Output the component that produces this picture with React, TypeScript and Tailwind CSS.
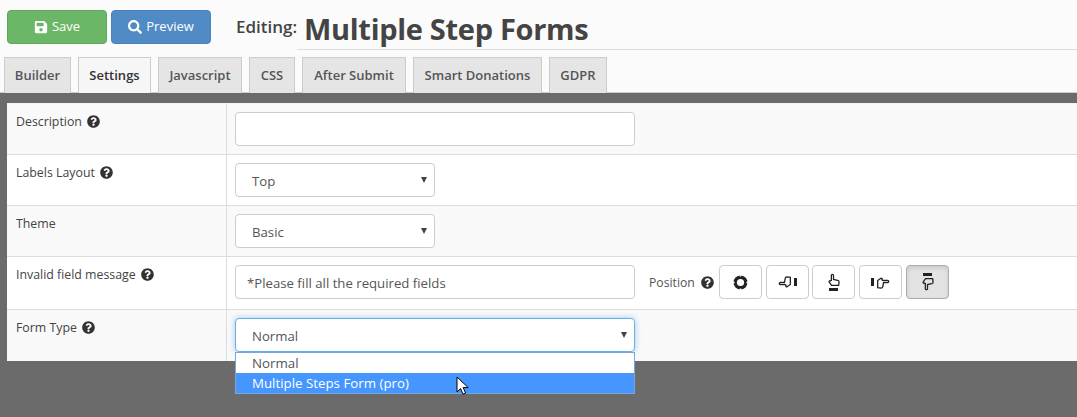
import React from 'react';
import { FaSave, FaSearch, FaQuestionCircle } from 'react-icons/fa';

const tabs = [
  { name: 'Builder', w: 'w-[67px]' },
  { name: 'Settings', w: 'w-[73px]' },
  { name: 'Javascript', w: 'w-[84px]' },
  { name: 'CSS', w: 'w-[46px]' },
  { name: 'After Submit', w: 'w-[104px]' },
  { name: 'Smart Donations', w: 'w-[129px]' },
  { name: 'GDPR', w: 'w-[58px]' },
];

const Help = () => <FaQuestionCircle size={13} className="text-[#333] inline-block" />;

const Caret = () => (
  <span className="absolute right-[7px] top-[13px] w-0 h-0 border-x-[3px] border-x-transparent border-t-[6px] border-t-[#444]" />
);

const Select = ({ value, width, focus }: { value: string; width: string; focus?: boolean }) => (
  <div
    className={`relative h-[34px] ${width} bg-white rounded border flex items-center pl-[16px] pt-[3px] text-[13.2px] text-[#555] ${
      focus ? 'border-[#66afe9] shadow-[0_0_6px_rgba(102,175,233,0.6)]' : 'border-[#ccc]'
    }`}
  >
    {value}
    <Caret />
  </div>
);

const Row = ({ label, help, odd, children, h }: { label: string; help?: boolean; odd: boolean; children: React.ReactNode; h: string }) => (
  <div className={`flex ${h} border-b border-[#ddd] last:border-b-0 ${odd ? 'bg-[#f9f9f9]' : 'bg-white'}`}>
    <div className="w-[220px] shrink-0 border-r border-[#ddd] pl-[9px] pt-[9px] flex items-start gap-[5px] text-[12.35px] leading-[18px] text-[#444]">
      {label}
      {help && <span className="h-[18px] flex items-center -mt-[1px]"><Help /></span>}
    </div>
    <div className="flex-1 pl-[8px] pt-[8px] flex items-start">{children}</div>
  </div>
);

const PosButton = ({ children, active }: { children: React.ReactNode; active?: boolean }) => (
  <div
    className={`w-[43px] h-[34px] rounded border flex items-center justify-center ${
      active ? 'bg-[#e3e3e3] border-[#adadad] shadow-[inset_0_2px_4px_rgba(0,0,0,0.12)]' : 'bg-white border-[#ccc]'
    }`}
  >
    {children}
  </div>
);

// thin outlined hand, drawn pointing up; the other directions are transforms of it
const Hand = ({ transform }: { transform?: string }) => (
  <svg width="15" height="15" viewBox="0 0 14 14" fill="none" stroke="#222" strokeWidth="1.2">
    <path
      transform={transform}
      d="M5 7V2.2a1 1 0 0 1 2 0V6l4 .8c.8.2 1.2.7 1.2 1.5l-.4 3.2H5.2L3 8.5c-.5-.8.5-1.7 1.2-1z"
    />
  </svg>
);

export default function App() {
  return (
    <div className="relative w-[1077px] h-[417px] overflow-hidden bg-[#6b6b6b] text-[#333]" style={{ fontFamily: '"Open Sans", sans-serif' }}>
      <div className="bg-[#fbfbfb] h-[93px] border-b border-[#ccc]">
        <div className="flex items-start pl-[7px] pt-[10px] h-[57px]">
          <div className="w-[100px] h-[34px] bg-[#6cb767] border border-[#5fa85b] rounded flex items-center justify-center gap-[4px] text-white text-[13px]">
            <FaSave size={14} />
            Save
          </div>
          <div className="ml-[4px] w-[100px] h-[34px] bg-[#508bc6] border border-[#4a82bb] rounded flex items-center justify-center gap-[4px] text-white text-[13px]">
            <FaSearch size={14} />
            Preview
          </div>
          <div className="ml-[25px] text-[17px] font-semibold text-[#444] leading-[34px] w-[61px]">Editing:</div>
          <div className="flex-1 h-[41px] border-b border-[#ddd] text-[29px] tracking-[-0.3px] font-bold text-[#444] leading-[40px] pl-[7px] -mt-[1px]">
            Multiple Step Forms
          </div>
        </div>
        <div className="flex pl-[4px] gap-[7px] h-[36px]">
          {tabs.map((t) => (
            <div
              key={t.name}
              className={`${t.w} h-[36px] border border-b-0 border-[#ccc] flex items-center justify-center text-[13px] font-semibold ${
                t.name === 'Settings' ? 'bg-[#f6f6f6] text-[#333]' : 'bg-[#e5e5e5] text-[#555]'
              }`}
            >
              {t.name}
            </div>
          ))}
        </div>
      </div>
      <div className="pl-[7px] pt-[10px]">
        <div className="bg-white border-t border-[#f3f3f3]">
          <Row label="Description" help odd h="h-[51px]">
            <div className="w-[400px] h-[34px] bg-white border border-[#ccc] rounded" />
          </Row>
          <Row label="Labels Layout" help odd={false} h="h-[51px]">
            <Select value="Top" width="w-[200px]" />
          </Row>
          <Row label="Theme" odd h="h-[51px]">
            <Select value="Basic" width="w-[200px]" />
          </Row>
          <Row label="Invalid field message" help odd={false} h="h-[53px]">
            <div className="w-[400px] h-[34px] bg-white border border-[#ccc] rounded flex items-center pl-[11px] pt-[3px] text-[13.2px] text-[#555]">
              *Please fill all the required fields
            </div>
            <div className="ml-[14px] h-[34px] flex items-center gap-[6px] text-[12.2px] text-[#555]">
              <span className="pt-[2px]">Position</span> <Help />
            </div>
            <div className="ml-[5px] flex gap-[3.75px]">
              <PosButton>
                <svg width="15" height="15" viewBox="0 0 15 15">
                  <circle cx="7.5" cy="7.5" r="7" fill="#222" />
                  <circle cx="7.5" cy="7.5" r="3.6" fill="#fff" />
                  <path d="M6.7 0h1.6v1.6H6.7zM6.7 13.4h1.6V15H6.7zM0 6.7h1.6v1.6H0zM13.4 6.7H15v1.6h-1.6z" fill="#fff" />
                </svg>
              </PosButton>
              <PosButton>
                <span className="flex items-center gap-[1px]">
                  <Hand transform="rotate(-90 7 7)" />
                  <span className="w-[3px] h-[8px] bg-[#222]" />
                </span>
              </PosButton>
              <PosButton>
                <span className="flex flex-col items-center">
                  <Hand />
                  <span className="w-[9px] h-[3px] bg-[#222]" />
                </span>
              </PosButton>
              <PosButton>
                <span className="flex items-center gap-[1px]">
                  <span className="w-[3px] h-[8px] bg-[#222]" />
                  <Hand transform="rotate(90 7 7)" />
                </span>
              </PosButton>
              <PosButton active>
                <span className="flex flex-col items-center">
                  <span className="w-[9px] h-[3px] bg-[#222]" />
                  <Hand transform="matrix(1 0 0 -1 0 14)" />
                </span>
              </PosButton>
            </div>
          </Row>
          <Row label="Form Type" help odd h="h-[51px]">
            <Select value="Normal" width="w-[400px]" focus />
          </Row>
        </div>
      </div>

      {/* open select list */}
      <div className="absolute left-[235px] top-[352px] w-[400px] h-[42px] bg-white border border-[#7aa7d9] text-[13.3px] leading-[20px]">
        <div className="h-[20px] pl-[16px] text-[#555]">Normal</div>
        <div className="h-[20px] pl-[16px] bg-[#4596ff] text-white">Multiple Steps Form (pro)</div>
      </div>

      {/* mouse pointer */}
      <svg className="absolute left-[456px] top-[376px]" width="13" height="20" viewBox="0 0 13 20">
        <path d="M1 1v15l3.6-3.4 2.4 5.6 2.6-1.1-2.4-5.5h5z" fill="#fff" stroke="#000" strokeWidth="1" />
      </svg>
    </div>
  );
}
